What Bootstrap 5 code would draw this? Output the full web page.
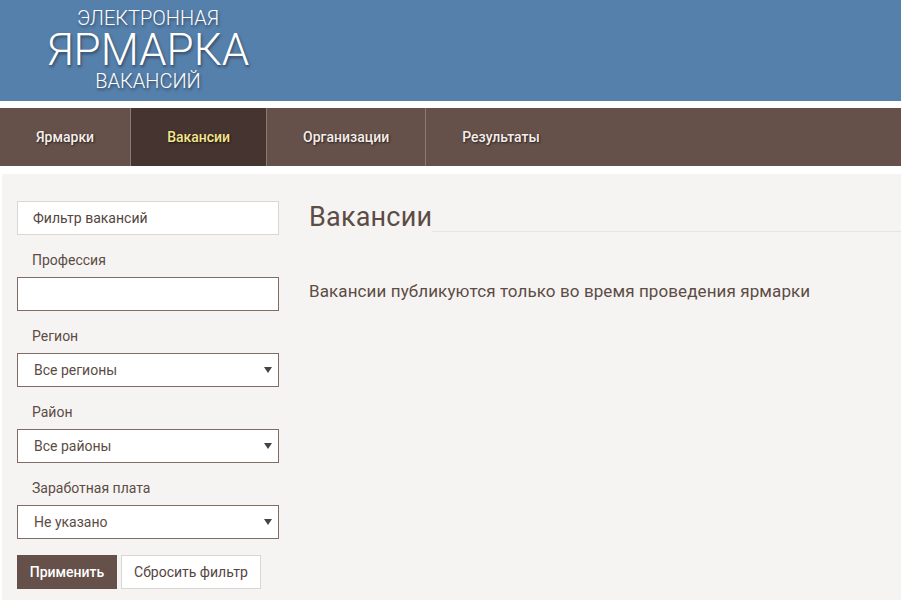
<!doctype html>
<html lang="ru">
<head>
    <meta charset="utf-8">
    <meta name="viewport" content="width=device-width, initial-scale=1">
    <title>Электронная ярмарка вакансий</title>
    <link href="https://cdn.jsdelivr.net/npm/bootstrap@5.3.3/dist/css/bootstrap.min.css" rel="stylesheet">
    <style>
        body { font-family: Roboto, "Liberation Sans", sans-serif; color: #5c4c45; background: #fff; overflow: hidden; }
        .site-header { height: 101px; background: #5580ac; }
        .logo { width: 296px; color: #fff; font-weight: 300; text-align: center; text-transform: uppercase; text-shadow: 1px 2px 3px rgba(30,40,50,.65); }
        .logo div { line-height: 1; }
        .logo-top { font-size: 20px; padding-top: 8px; height: 29px; }
        .logo-main { font-size: 44px; height: 41px; margin-top: -1px; }
        .logo-bottom { font-size: 20px; padding-top: 2px; }
        .main-nav { margin-top: 7px; height: 58px; background: #65504a; }
        .main-nav a { display: flex; align-items: center; height: 58px; padding: 0 36px; color: #f3eeea; font-size: 14px; font-weight: 500; text-decoration: none; text-shadow: 1px 1px 2px rgba(0,0,0,.6); border-right: 1px solid #8a7a73; }
        .main-nav a.active { background: #45342f; color: #f5e58c; }
        .main-nav a:last-child { border-right: 0; }
        .panel-main { margin: 8px 0 0 2px; padding: 27px 0 0 15px; background: #f6f4f2; height: 427px; gap: 30px; }
        .sidebar { width: 262px; flex: none; font-size: 14px; }
        .filter-title { height: 34px; padding: 0 15px; line-height: 32px; background: #fff; border: 1px solid #d9d6d3; color: #55453f; }
        .sidebar label { display: block; padding-left: 15px; margin: 15px 0 7px; line-height: 20px; color: #5c4c45; }
        .sidebar .form-control, .sidebar .form-select { height: 34px; padding: 0 15px; border: 1px solid #806c64; border-radius: 0; font-size: 14px; color: #5c4c45; box-shadow: none; }
        .sidebar .form-select { padding-left: 16px; background-size: 8px 6px; background-position: right 6px center; background-image: url("data:image/svg+xml,%3csvg xmlns='http://www.w3.org/2000/svg' viewBox='0 0 8 6'%3e%3cpath fill='%23444' d='M0 0h8L4 6z'/%3e%3c/svg%3e"); }
        .btn-apply, .btn-reset { height: 34px; padding: 0; border-radius: 0; font-size: 14px; }
        .btn-apply { width: 100px; background: #65504a; border: 0; color: #fff; font-weight: 500; }
        .btn-reset { width: 140px; background: #fff; border: 1px solid #d9d6d3; color: #55453f; }
        .page-title { font-size: 27px; font-weight: 400; line-height: 32px; color: #5c4c45; margin: 0; letter-spacing: .2px; }
        .title-rule { border-bottom: 1px solid #e6e3e0; height: 31px; }
        .notice { margin: 46px 0 0; font-size: 17px; line-height: 24px; color: #5c4c45; letter-spacing: .1px; }
    </style>
</head>
<body>
    <header class="site-header">
        <div class="logo">
            <div class="logo-top">Электронная</div>
            <div class="logo-main">Ярмарка</div>
            <div class="logo-bottom">вакансий</div>
        </div>
    </header>

    <nav class="main-nav d-flex">
        <a href="#">Ярмарки</a>
        <a href="#" class="active">Вакансии</a>
        <a href="#">Организации</a>
        <a href="#">Результаты</a>
    </nav>

    <main class="panel-main d-flex">
        <form class="sidebar">
            <div class="filter-title">Фильтр вакансий</div>
            <label for="job">Профессия</label>
            <input id="job" type="text" class="form-control">
            <label for="region">Регион</label>
            <select id="region" class="form-select"><option>Все регионы</option></select>
            <label for="district">Район</label>
            <select id="district" class="form-select"><option>Все районы</option></select>
            <label for="salary">Заработная плата</label>
            <select id="salary" class="form-select"><option>Не указано</option></select>
            <div class="d-flex gap-1 mt-3">
                <button type="button" class="btn btn-apply">Применить</button>
                <button type="button" class="btn btn-reset">Сбросить фильтр</button>
            </div>
        </form>
        <section class="flex-grow-1">
            <div class="d-flex align-items-start">
                <h1 class="page-title">Вакансии</h1>
                <div class="title-rule flex-grow-1"></div>
            </div>
            <p class="notice">Вакансии публикуются только во время проведения ярмарки</p>
        </section>
    </main>
    <script src="https://cdn.jsdelivr.net/npm/bootstrap@5.3.3/dist/js/bootstrap.bundle.min.js"></script>
</body>
</html>
